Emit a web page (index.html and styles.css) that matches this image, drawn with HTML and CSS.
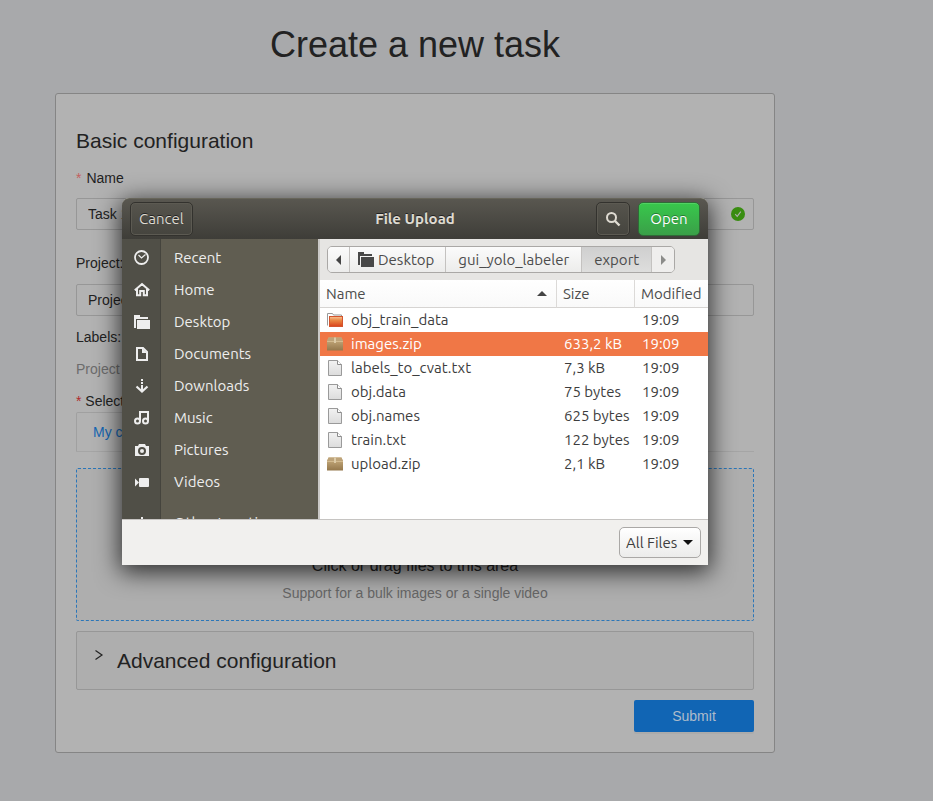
FILE: index.html
```html
<!DOCTYPE html>
<html lang="en">
<head>
<meta charset="utf-8">
<title>Create a new task</title>
<link rel="stylesheet" href="styles.css">
</head>
<body>
<main class="page">
  <h1 class="page-title">Create a new task</h1>
  <form class="card">
    <h2 class="card-title">Basic configuration</h2>
    <label class="label" for="name"><span class="required mark">*</span>Name</label>
    <div class="field">
      <input class="control" id="name" type="text" value="Task 1">
      <svg class="valid" viewBox="0 0 14 14" aria-hidden="true"><circle cx="7" cy="7" r="7" fill="#3a8e12"/><path d="M4.2 7.1l2 2.2 3.6-4.6" fill="none" stroke="#b2b2b2" stroke-width="1.1"/></svg>
    </div>
    <label class="label label-spaced" for="project">Project:</label>
    <div class="field">
      <select class="control" id="project"><option>Project 1</option></select>
    </div>
    <p class="text">Labels:</p>
    <p class="text muted">Project labels will be used</p>
    <p class="text"><span class="required strong">*</span> Select files:</p>
    <div class="tabs"><button class="tab" type="button">My computer</button></div>
    <div class="dropzone">
      <p class="drop-title">Click or drag files to this area</p>
      <p class="drop-hint">Support for a bulk images or a single video</p>
    </div>
    <button class="advanced" type="button">
      <svg class="chevron" viewBox="0 0 10 12" aria-hidden="true"><path d="M1.500 1.500L8 6l-6.500 4.500" fill="none" stroke="#222" stroke-width="1.2"/></svg>
      <span>Advanced configuration</span>
    </button>
    <button class="submit" type="submit">Submit</button>
  </form>
</main>

<section class="dialog" role="dialog" aria-labelledby="dialog-title">
  <header class="titlebar">
    <div><button class="bar-button" type="button">Cancel</button></div>
    <h2 class="dialog-title" id="dialog-title">File Upload</h2>
    <div class="bar-end">
      <button class="bar-button search" type="button" aria-label="Search"><svg width="16" height="16" viewBox="0 0 16 16"><circle cx="6.500" cy="6.500" r="4.500" fill="none" stroke="#dfdbd2" stroke-width="2"/><path d="M10 10l4.500 4.500" stroke="#dfdbd2" stroke-width="2.400"/></svg></button>
      <button class="bar-button open" type="button">Open</button>
    </div>
  </header>
  <div class="browser">
    <nav class="places">
      <a class="place" href="#"><svg class="place-icon" viewBox="0 0 16 16"><circle cx="7.500" cy="7.500" r="6.500" fill="none" stroke="#eee" stroke-width="1.800"/><path d="M4.500 5l3 3 4-3.500" fill="none" stroke="#eee" stroke-width="1.200"/></svg><span>Recent</span></a>
      <a class="place" href="#"><svg class="place-icon" viewBox="0 0 16 16"><path d="M.8 8.300L8 2l7.200 6.300M3 7v6.200h3.200V9h3.600v4.200H13V7" fill="none" stroke="#eee" stroke-width="2"/></svg><span>Home</span></a>
      <a class="place" href="#"><svg class="place-icon" viewBox="0 0 16 16"><path d="M0 1h6v2h8v2H2v9H0z M3 6h13v9H3z" fill="#eee"/></svg><span>Desktop</span></a>
      <a class="place" href="#"><svg class="place-icon" viewBox="0 0 16 16"><path d="M3 2h6l4 4v8H3z" fill="none" stroke="#eee" stroke-width="2"/><path d="M8 2v5h5z" fill="#eee"/></svg><span>Documents</span></a>
      <a class="place" href="#"><svg class="place-icon" viewBox="0 0 16 16"><path d="M7 1h2v2H7zM7 4h2v2H7zM7 7h2v5H7z" fill="#eee"/><path d="M2.500 8.500L8 13.500l5.500-5" fill="none" stroke="#eee" stroke-width="2.200"/></svg><span>Downloads</span></a>
      <a class="place" href="#"><svg class="place-icon" viewBox="0 0 16 16"><path d="M6 11V2h8v9" fill="none" stroke="#eee" stroke-width="2"/><circle cx="3.500" cy="11" r="2.500" fill="none" stroke="#eee" stroke-width="2"/><circle cx="11.500" cy="11" r="2.500" fill="none" stroke="#eee" stroke-width="2"/></svg><span>Music</span></a>
      <a class="place" href="#"><svg class="place-icon" viewBox="0 0 16 16"><path d="M1 4h3l1-2h6l1 2h3v10H1z" fill="#eee"/><circle cx="8" cy="9" r="3" fill="none" stroke="#4f4e46" stroke-width="2"/></svg><span>Pictures</span></a>
      <a class="place" href="#"><svg class="place-icon" viewBox="0 0 16 16"><rect x="5" y="4" width="10" height="9" rx="1" fill="#eee"/><path d="M1 4.500l4 4-4 4z" fill="#eee"/></svg><span>Videos</span></a>
      <a class="place other" href="#"><svg class="place-icon" viewBox="0 0 16 16"><path d="M8 2v12M2 8h12" stroke="#eee" stroke-width="2"/></svg><span>Other Locations</span></a>
    </nav>
    <div class="files">
      <div class="path">
        <div class="crumbs">
          <button class="crumb arrow" type="button" aria-label="Back"><svg width="5" height="10" viewBox="0 0 5 10"><path d="M5 0v10L0 5z" fill="#444"/></svg></button>
          <button class="crumb" type="button"><svg width="16" height="15" viewBox="0 0 16 15"><path d="M0 0h6v2h8v2H2v9H0z M3 5h13v10H3z" fill="#484848"/></svg>Desktop</button>
          <button class="crumb wide" type="button">gui_yolo_labeler</button>
          <button class="crumb wide current" type="button">export</button>
          <button class="crumb arrow" type="button" aria-label="Forward" disabled><svg width="5" height="10" viewBox="0 0 5 10"><path d="M0 0v10l5-5z" fill="#8c8c8a"/></svg></button>
        </div>
      </div>
      <table class="list">
        <colgroup><col><col class="col-size"><col class="col-date"></colgroup>
        <thead>
          <tr><th><span class="sort">Name<svg width="10" height="5" viewBox="0 0 10 5"><path d="M0 5l5-5 5 5z" fill="#444"/></svg></span></th><th>Size</th><th>Modified</th></tr>
        </thead>
        <tbody>
          <tr><td><span class="file"><svg width="16" height="16" viewBox="0 0 16 16"><path d="M.5 13.500v-12h5l1 1.500h8v3" fill="#fff" stroke="#999"/><rect x="2.500" y="4.500" width="13" height="10" fill="url(#orange)" stroke="#d4552e"/></svg>obj_train_data</span></td><td></td><td>19:09</td></tr>
          <tr class="selected"><td><span class="file"><svg width="16" height="16" viewBox="0 0 16 16"><use href="#box"/></svg>images.zip</span></td><td>633,2 kB</td><td>19:09</td></tr>
          <tr><td><span class="file"><svg width="16" height="16" viewBox="0 0 16 16"><use href="#doc"/></svg>labels_to_cvat.txt</span></td><td>7,3 kB</td><td>19:09</td></tr>
          <tr><td><span class="file"><svg width="16" height="16" viewBox="0 0 16 16"><use href="#doc"/></svg>obj.data</span></td><td>75 bytes</td><td>19:09</td></tr>
          <tr><td><span class="file"><svg width="16" height="16" viewBox="0 0 16 16"><use href="#doc"/></svg>obj.names</span></td><td>625 bytes</td><td>19:09</td></tr>
          <tr><td><span class="file"><svg width="16" height="16" viewBox="0 0 16 16"><use href="#doc"/></svg>train.txt</span></td><td>122 bytes</td><td>19:09</td></tr>
          <tr><td><span class="file"><svg width="16" height="16" viewBox="0 0 16 16"><use href="#box"/></svg>upload.zip</span></td><td>2,1 kB</td><td>19:09</td></tr>
        </tbody>
      </table>
    </div>
  </div>
  <footer class="dialog-footer">
    <div class="filter">
      <select class="filter-select" aria-label="File type"><option>All Files</option></select>
      <svg class="filter-arrow" viewBox="0 0 10 5" aria-hidden="true"><path d="M0 0h10L5 5z" fill="#111"/></svg>
    </div>
  </footer>
</section>

<svg class="defs" width="0" height="0" aria-hidden="true">
  <defs>
    <linearGradient id="orange" x1="0" y1="0" x2="0" y2="1"><stop offset="0" stop-color="#f7c497"/><stop offset=".4" stop-color="#ea8642"/><stop offset="1" stop-color="#d9421a"/></linearGradient>
    <linearGradient id="carton" x1="0" y1="0" x2="0" y2="1"><stop offset="0" stop-color="#ceb384"/><stop offset="1" stop-color="#94774c"/></linearGradient>
    <linearGradient id="paper" x1="0" y1="0" x2="0" y2="1"><stop offset="0" stop-color="#f2f2f2"/><stop offset="1" stop-color="#dcdcdc"/></linearGradient>
    <g id="box"><path d="M1.500 1.500h13L16 5v9.500H0V5z" fill="url(#carton)"/><path d="M1.500 1.500h13L16 5H0z" fill="#bda379"/><path d="M0 5.500h16" stroke="#d3bb90"/><path d="M7 1.500h2V7H7z" fill="#dccaa7"/></g>
    <g id="doc"><path d="M1.500.5h9l4 4v11h-13z" fill="url(#paper)" stroke="#9a9a9a"/><path d="M10.500.5v4h4" fill="#fff" stroke="#8c8c8c"/></g>
  </defs>
</svg>
</body>
</html>
```
FILE: styles.css
```css
* { box-sizing: border-box; }

body {
  margin: 0;
  min-height: 100vh;
  background: #a8a9ab;
  color: #222;
  font: 14px/22px "Liberation Sans", Arial, sans-serif;
}

h1, h2, p { margin: 0; font-weight: 400; }
button, input, select { font: inherit; color: inherit; }

/* Task form */
.page { padding: 21px 158px 21px 55px; }
.page-title {
  margin-bottom: 24px;
  font-size: 36px;
  line-height: 48px;
  text-align: center;
}
.card {
  display: flex;
  flex-direction: column;
  padding: 20px;
  border: 1px solid #858585;
  border-radius: 3px;
  background: #b2b2b2;
}
.card-title { padding: 10px 0 9px; font-size: 21px; line-height: 34px; }
.label { margin-bottom: 10px; align-self: flex-start; }
.card-title + .label { margin-bottom: 9px; }
.label-spaced { margin-top: 22px; }
.required { color: #c4605f; }
.required.mark { margin-right: 5px; }
.required.strong { color: #b02a2c; }
.field { position: relative; }
.control {
  display: block;
  width: 100%;
  height: 32px;
  padding: 4px 11px;
  border: 1px solid #979797;
  border-radius: 2px;
  background: #b2b2b2;
  appearance: none;
}
.valid { position: absolute; top: 9px; right: 9px; width: 14px; height: 14px; }
.text { margin-top: 10px; }
.muted { color: #6c6c6c; }
.tabs { display: flex; height: 40px; border-bottom: 1px solid #a5a5a5; }
.tab {
  padding: 0 16px;
  border: 1px solid #a0a0a0;
  border-bottom: 0;
  border-radius: 2px 2px 0 0;
  background: #b2b2b2;
  color: #1566b3;
}
.dropzone {
  margin-top: 16px;
  padding: 85px 16px 16px;
  border: 1px dashed #2a76b9;
  border-radius: 2px;
  background: #aeaeae;
  text-align: center;
}
.drop-title { font-size: 16px; line-height: 24px; margin-bottom: 4px; }
.drop-hint { color: #666; }
.advanced {
  display: flex;
  gap: 12px;
  margin-top: 10px;
  padding: 12px 16px;
  border: 1px solid #979797;
  border-radius: 2px;
  background: #aeaeae;
  font-size: 21px;
  line-height: 33px;
}
.chevron { width: 12px; height: 12px; margin-top: 5px; }
.submit {
  align-self: flex-end;
  width: 120px;
  height: 32px;
  margin-top: 10px;
  border: 0;
  border-radius: 2px;
  background: #1165b4;
  box-shadow: 0 2px 0 rgba(0, 0, 0, .04);
  color: #aebccb;
}

/* File chooser */
.dialog {
  position: absolute;
  top: 198px;
  left: 122px;
  width: 586px;
  border-radius: 7px 7px 0 0;
  background: #f1f0ee;
  box-shadow: 0 5px 24px 2px rgba(0, 0, 0, .75);
  color: #3d3d3d;
  font: 15px/20px Ubuntu, "Noto Sans", sans-serif;
}
.titlebar {
  display: grid;
  grid-template-columns: 1fr auto 1fr;
  align-items: center;
  height: 41px;
  padding: 0 8px;
  border-radius: 7px 7px 0 0;
  border-top: 1px solid #67655a;
  background: linear-gradient(#595750, #3e3d38);
  color: #dfdbd2;
}
.dialog-title { font-size: 15px; font-weight: 700; text-shadow: 0 -1px #222; }
.bar-end { display: flex; justify-content: flex-end; gap: 8px; }
.bar-button {
  height: 34px;
  padding: 0 8px;
  border: 1px solid #33322e;
  border-radius: 5px;
  background: linear-gradient(#56544d, #45443e);
  box-shadow: inset 0 0 0 1px #5c5a52;
  text-shadow: 0 -1px #222;
}
.bar-button.search { display: grid; place-items: center; width: 34px; padding: 0; }
.bar-button.open {
  width: 62px;
  border-color: #2f6b37;
  background: linear-gradient(#38c84c, #3a9f48);
  box-shadow: inset 0 1px #52d263;
  color: #fff;
  text-shadow: 0 -1px #267d32;
}
.browser { display: flex; height: 280px; }
.places {
  flex: 0 0 198px;
  overflow: hidden;
  padding-top: 3px;
  border-right: 2px solid #cbc9c7;
  background: linear-gradient(to right, #504f47 38px, #45443d 38px, #45443d 39px, #605d51 39px);
}
.place {
  display: flex;
  align-items: center;
  gap: 24px;
  height: 32px;
  padding-left: 12px;
  color: #eee;
  text-decoration: none;
}
.place-icon { width: 16px; height: 16px; }
.place.other { margin-top: 9px; }
.files { flex: 1; min-width: 0; background: #fff; }
.path { padding: 7px; background: #e6e5e3; }
.crumbs {
  display: inline-flex;
  height: 27px;
  vertical-align: top;
  overflow: hidden;
  border: 1px solid #aaa8a6;
  border-radius: 5px;
}
.crumb {
  display: flex;
  align-items: center;
  gap: 4px;
  padding: 0 11px 0 8px;
  border: 0;
  border-right: 1px solid #c4c2c0;
  background: linear-gradient(#fbfbfb, #ececeb);
  color: #4c4c4c;
}
.crumb.wide { padding: 0 12px; }
.crumb.arrow { width: 22px; padding: 0; justify-content: center; }
.crumb.current { background: linear-gradient(#cfcfcf, #dededd); }
.crumb:last-child { border-right: 0; background: #efeeed; }
.list { width: 100%; border-spacing: 0; table-layout: fixed; }
.col-size { width: 78px; }
.col-date { width: 74px; }
.list th {
  height: 28px;
  padding: 0 6px;
  border-bottom: 1px solid #d6d4d2;
  border-left: 1px solid #dcdad8;
  background: linear-gradient(#fff, #f9f9f9);
  color: #4c4c4c;
  font-weight: 400;
  text-align: left;
}
.list th:first-child { border-left: 0; }
.sort { display: flex; align-items: center; justify-content: space-between; padding-right: 3px; }
.list td { height: 24px; padding: 0 0 0 8px; white-space: nowrap; }
.list td:first-child { padding-left: 7px; }
.file { display: flex; align-items: center; gap: 8px; }
.selected td { background: #f07746; color: #fff; }
.dialog-footer {
  display: flex;
  justify-content: flex-end;
  padding: 7px;
  border-top: 1px solid #c6c4c2;
}
.filter { position: relative; }
.filter-select {
  display: block;
  height: 31px;
  width: 82px;
  padding: 0 6px;
  border: 1px solid #aaa8a6;
  border-radius: 5px;
  background: linear-gradient(#fff, #ececeb);
  appearance: none;
}
.filter-arrow {
  position: absolute;
  top: 13px;
  right: 8px;
  width: 10px;
  height: 5px;
  pointer-events: none;
}
.defs { position: absolute; }
```
